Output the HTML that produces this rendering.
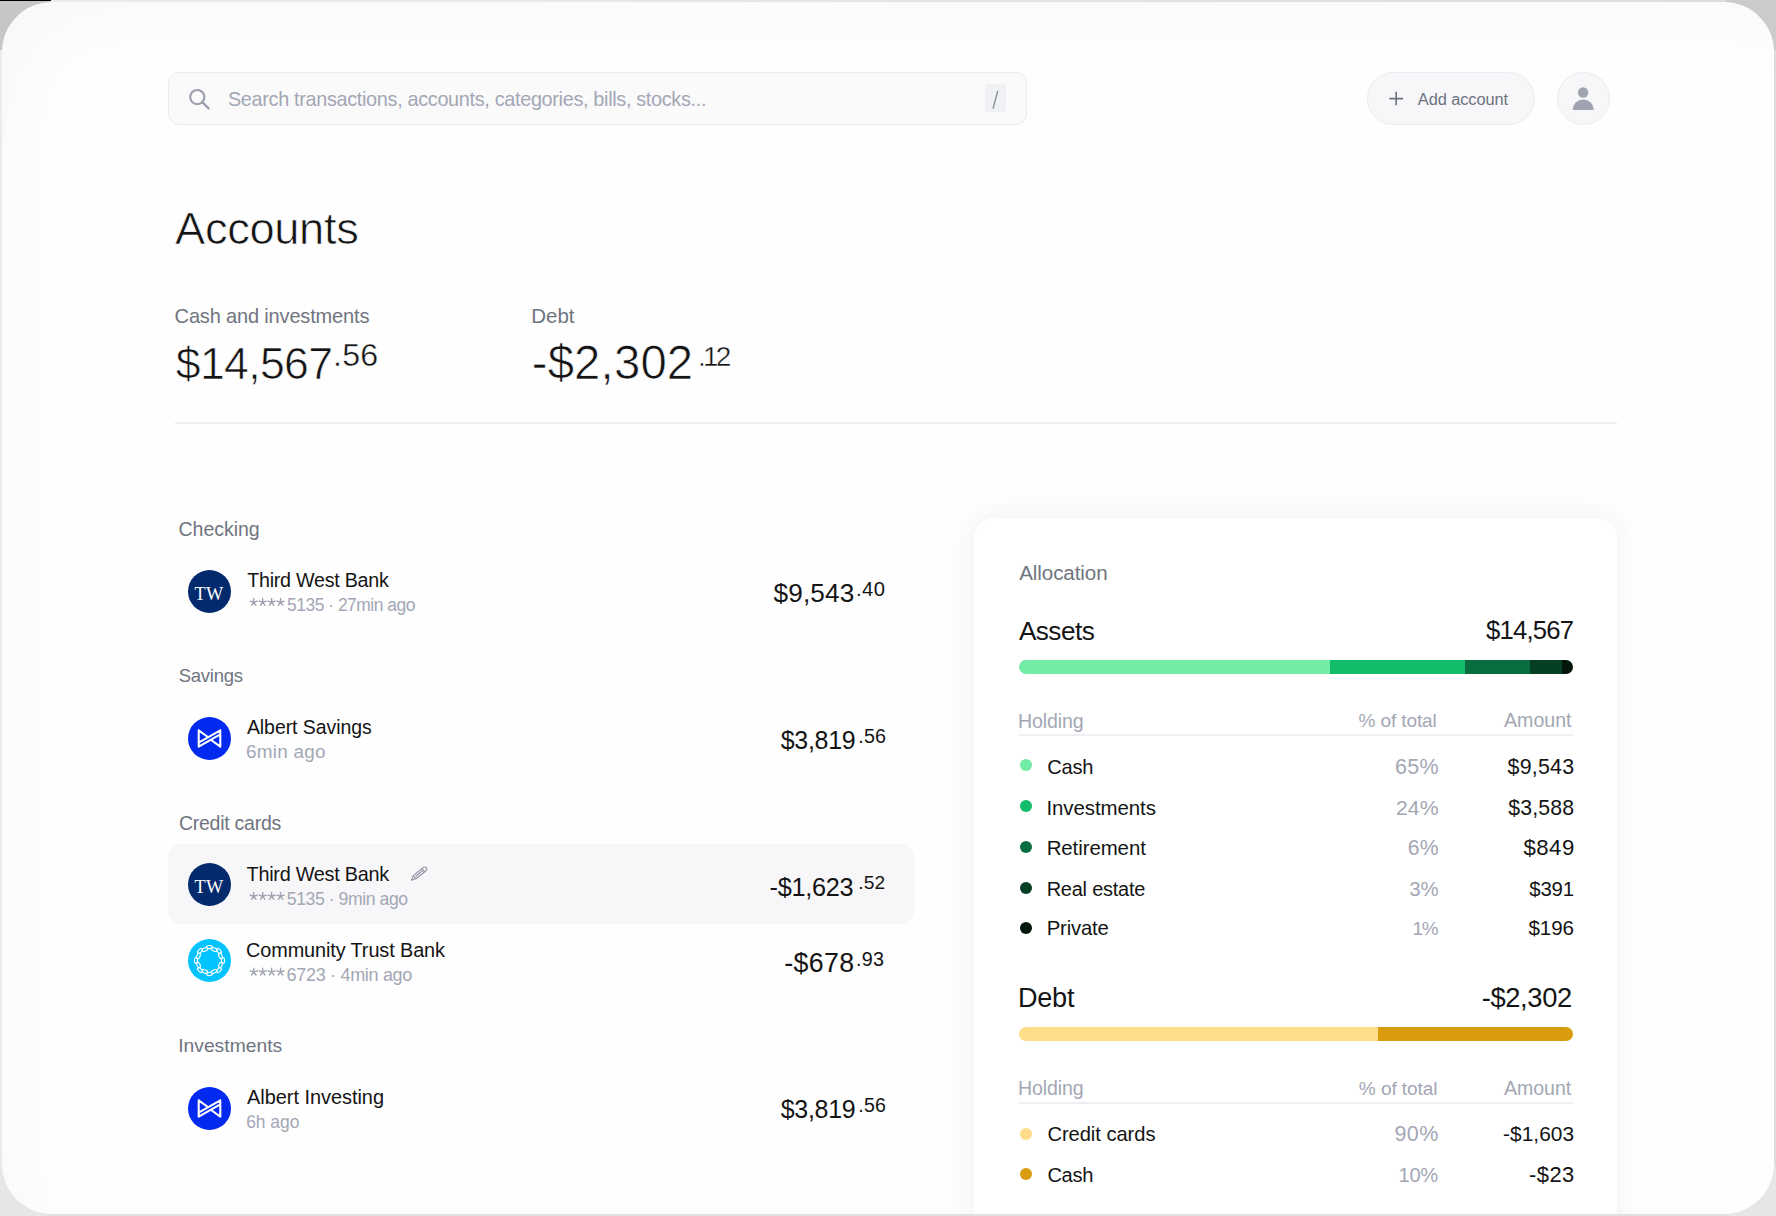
<!DOCTYPE html>
<html><head><meta charset="utf-8"><style>
html,body{margin:0;padding:0;width:1776px;height:1216px;overflow:hidden}
body{background:linear-gradient(90deg,#ececec 0,#e4e4e4 50%,#dcdcdc 100%);position:relative;font-family:"Liberation Sans",sans-serif}
.frame{position:absolute;left:2px;top:2px;width:1772px;height:1212px;border-radius:50px;background:#fefefe;overflow:hidden}
.sheen{position:absolute;left:0;top:0;width:1772px;height:1212px;border-radius:50px;box-shadow:inset 40px 40px 90px -30px rgba(0,0,0,0.028)}
.topbar{position:absolute;left:0;top:0;width:51px;height:1px;background:#000}
.t{position:absolute;white-space:nowrap}
.ic{position:absolute;display:block}
.circ{position:absolute;border-radius:50%}
.search{position:absolute;left:168px;top:72px;width:857px;height:51px;border:1px solid #ebecf0;border-radius:11px;background:#fafafb}
.kbd{position:absolute;left:985px;top:84px;width:21px;height:28px;border-radius:3px;background:#f0f1f5}
.btn{position:absolute;left:1367px;top:72px;width:166px;height:51px;border:1px solid #ebecf0;border-radius:27px;background:#f7f7f9}
.avatar{position:absolute;left:1557px;top:72px;width:51px;height:51px;border:1px solid #ebecf0;border-radius:50%;background:#f7f7f9}
.divider{position:absolute;left:175px;top:422px;width:1442px;height:2px;background:#f0f0f3}
.hl{position:absolute;left:168px;top:844px;width:746px;height:80px;border-radius:13px;background:#f7f7f9}
.card{position:absolute;left:974px;top:518px;width:643px;height:760px;border-radius:20px;background:#fff;box-shadow:0 0 22px 5px rgba(40,50,90,0.05)}
.bar{position:absolute;height:14px;border-radius:7px;overflow:hidden;display:flex}
.bar div{height:100%}
.rule{position:absolute;height:2px;background:#efeff3}
.dot{position:absolute;width:12px;height:12px;border-radius:50%}
</style></head><body>
<div style="position:absolute;left:0;top:0;width:50px;height:50px;background:#c6c6c6"></div>
<div style="position:absolute;right:0;top:0;width:50px;height:50px;background:#cbcbcb"></div>
<div style="position:absolute;left:0;bottom:0;width:50px;height:50px;background:#e6e6e6"></div>
<div style="position:absolute;right:0;bottom:0;width:50px;height:50px;background:#e6e6e6"></div>
<div class="topbar"></div>
<div class="frame"><div class="sheen"></div></div>
<div class="search"></div>
<svg class="ic" style="left:185px;top:85px" width="28" height="28" viewBox="185 85 28 28">
<circle cx="197.3" cy="97.1" r="7.1" stroke="#9a9eac" stroke-width="2.1" fill="none"/>
<line x1="202.6" y1="102.4" x2="208.6" y2="108.4" stroke="#9a9eac" stroke-width="2.2" stroke-linecap="round"/></svg>
<div class="kbd"></div>
<svg class="ic" style="left:985px;top:84px" width="21" height="28" viewBox="985 84 21 28">
<line x1="997.6" y1="91.5" x2="993.2" y2="108" stroke="#8e92a0" stroke-width="1.4" stroke-linecap="round"/></svg>
<div class="btn"></div>
<svg class="ic" style="left:1385px;top:88px" width="22" height="22" viewBox="1385 88 22 22">
<path d="M1389.4,98.6 H1403 M1396.2,91.8 V105.3" stroke="#6b6f7b" stroke-width="1.6"/></svg>
<div class="avatar"></div>
<svg class="ic" style="left:1557px;top:72px" width="53" height="53" viewBox="1557 72 53 53">
<circle cx="1583.1" cy="92.5" r="5.2" fill="#a0a4b1"/>
<path d="M1572.7,109.9 A10.5,10.5 0 0 1 1593.7,109.9 Z" fill="#a0a4b1"/></svg>
<div class="divider"></div>
<div class="hl"></div>
<svg class="ic" style="left:408px;top:863px" width="22" height="22" viewBox="408 863 22 22">
<g stroke="#8f93a1" stroke-width="1.1" fill="none" stroke-linejoin="round">
<path d="M411.6,880.2 L413.2,875.6 L423.4,867.4 Q425,866.3 426.4,867.9 Q427.6,869.4 426.1,870.7 L415.9,878.8 Z"/>
<path d="M413.2,875.6 L415.9,878.8 M421.9,868.6 L424.6,871.9 M415.6,876.2 L422.6,870.5"/></g></svg>
<div class="card"></div>
<div class="bar" style="left:1019px;top:660px;width:554px"><div style="width:311px;background:#72eba4"></div><div style="width:135px;background:#13bc6a"></div><div style="width:65px;background:#0a6d40"></div><div style="width:32px;background:#053f24"></div><div style="width:11px;background:#03160c"></div></div>
<div class="rule" style="left:1019px;top:734px;width:554px"></div>
<div class="dot" style="left:1019.8px;top:759px;background:#72eba4"></div>
<div class="dot" style="left:1019.8px;top:800px;background:#13bc6a"></div>
<div class="dot" style="left:1019.8px;top:840.8px;background:#0a6d40"></div>
<div class="dot" style="left:1019.8px;top:881.6px;background:#053f24"></div>
<div class="dot" style="left:1019.8px;top:922.4px;background:#03160c"></div>
<div class="bar" style="left:1019px;top:1027.4px;width:554px"><div style="width:359px;background:#ffdc8a"></div><div style="width:195px;background:#d99c0f"></div></div>
<div class="rule" style="left:1019px;top:1102px;width:554px"></div>
<div class="dot" style="left:1019.8px;top:1128px;background:#ffdc8a"></div>
<div class="dot" style="left:1019.8px;top:1168.2px;background:#d99c0f"></div>
<svg class="ic" style="left:0;top:0" width="1776" height="1216"><path d="M253.75,602.25 L253.75,598.50 M253.75,602.25 L257.32,601.09 M253.75,602.25 L255.95,605.28 M253.75,602.25 L251.55,605.28 M253.75,602.25 L250.18,601.09 M262.70,602.25 L262.70,598.50 M262.70,602.25 L266.27,601.09 M262.70,602.25 L264.90,605.28 M262.70,602.25 L260.50,605.28 M262.70,602.25 L259.13,601.09 M271.65,602.25 L271.65,598.50 M271.65,602.25 L275.22,601.09 M271.65,602.25 L273.85,605.28 M271.65,602.25 L269.45,605.28 M271.65,602.25 L268.08,601.09 M280.60,602.25 L280.60,598.50 M280.60,602.25 L284.17,601.09 M280.60,602.25 L282.80,605.28 M280.60,602.25 L278.40,605.28 M280.60,602.25 L277.03,601.09 " stroke="#9fa3b1" stroke-width="1.35" stroke-linecap="round" fill="none"/></svg>
<svg class="ic" style="left:0;top:0" width="1776" height="1216"><path d="M253.75,896.25 L253.75,892.50 M253.75,896.25 L257.32,895.09 M253.75,896.25 L255.95,899.28 M253.75,896.25 L251.55,899.28 M253.75,896.25 L250.18,895.09 M262.70,896.25 L262.70,892.50 M262.70,896.25 L266.27,895.09 M262.70,896.25 L264.90,899.28 M262.70,896.25 L260.50,899.28 M262.70,896.25 L259.13,895.09 M271.65,896.25 L271.65,892.50 M271.65,896.25 L275.22,895.09 M271.65,896.25 L273.85,899.28 M271.65,896.25 L269.45,899.28 M271.65,896.25 L268.08,895.09 M280.60,896.25 L280.60,892.50 M280.60,896.25 L284.17,895.09 M280.60,896.25 L282.80,899.28 M280.60,896.25 L278.40,899.28 M280.60,896.25 L277.03,895.09 " stroke="#9fa3b1" stroke-width="1.35" stroke-linecap="round" fill="none"/></svg>
<svg class="ic" style="left:0;top:0" width="1776" height="1216"><path d="M253.75,971.95 L253.75,968.20 M253.75,971.95 L257.32,970.79 M253.75,971.95 L255.95,974.98 M253.75,971.95 L251.55,974.98 M253.75,971.95 L250.18,970.79 M262.70,971.95 L262.70,968.20 M262.70,971.95 L266.27,970.79 M262.70,971.95 L264.90,974.98 M262.70,971.95 L260.50,974.98 M262.70,971.95 L259.13,970.79 M271.65,971.95 L271.65,968.20 M271.65,971.95 L275.22,970.79 M271.65,971.95 L273.85,974.98 M271.65,971.95 L269.45,974.98 M271.65,971.95 L268.08,970.79 M280.60,971.95 L280.60,968.20 M280.60,971.95 L284.17,970.79 M280.60,971.95 L282.80,974.98 M280.60,971.95 L278.40,974.98 M280.60,971.95 L277.03,970.79 " stroke="#9fa3b1" stroke-width="1.35" stroke-linecap="round" fill="none"/></svg>
<div class="circ" style="left:187.9px;top:569.8px;width:43px;height:43px;background:#022a6c"></div>
<svg class="ic" style="left:188.3px;top:717px" width="43" height="43" viewBox="-21.5 -21.5 43 43">
<circle r="21.5" fill="#0229ef"/>
<g stroke="#fff" stroke-width="2.1" stroke-linecap="round" stroke-linejoin="round" fill="none">
<path d="M-10.8,-8.2 L-1.29,-1.26 M-10.8,4.2 L10.8,-8.2 M-10.8,8.2 L10.8,-4.2 M10.8,8.2 L1.29,1.26 M-10.8,-8.2 L-10.8,8.2 M10.8,-8.2 L10.8,8.2"/>
</g></svg>
<div class="circ" style="left:188px;top:863.2px;width:43px;height:43px;background:#022a6c"></div>
<svg class="ic" style="left:188px;top:938.8px" width="43" height="43" viewBox="-21.5 -21.5 43 43">
<circle r="21.5" fill="#00c3ff"/>
<g stroke="#fff" stroke-width="1.15" fill="none"><ellipse cx="0.00" cy="-13.50" rx="3.0" ry="1.55" transform="rotate(0.0 0.00 -13.50)"/><ellipse cx="4.55" cy="-10.99" rx="3.0" ry="1.55" transform="rotate(22.5 4.55 -10.99)"/><ellipse cx="9.55" cy="-9.55" rx="3.0" ry="1.55" transform="rotate(45.0 9.55 -9.55)"/><ellipse cx="10.99" cy="-4.55" rx="3.0" ry="1.55" transform="rotate(67.5 10.99 -4.55)"/><ellipse cx="13.50" cy="0.00" rx="3.0" ry="1.55" transform="rotate(90.0 13.50 0.00)"/><ellipse cx="10.99" cy="4.55" rx="3.0" ry="1.55" transform="rotate(112.5 10.99 4.55)"/><ellipse cx="9.55" cy="9.55" rx="3.0" ry="1.55" transform="rotate(135.0 9.55 9.55)"/><ellipse cx="4.55" cy="10.99" rx="3.0" ry="1.55" transform="rotate(157.5 4.55 10.99)"/><ellipse cx="0.00" cy="13.50" rx="3.0" ry="1.55" transform="rotate(180.0 0.00 13.50)"/><ellipse cx="-4.55" cy="10.99" rx="3.0" ry="1.55" transform="rotate(202.5 -4.55 10.99)"/><ellipse cx="-9.55" cy="9.55" rx="3.0" ry="1.55" transform="rotate(225.0 -9.55 9.55)"/><ellipse cx="-10.99" cy="4.55" rx="3.0" ry="1.55" transform="rotate(247.5 -10.99 4.55)"/><ellipse cx="-13.50" cy="0.00" rx="3.0" ry="1.55" transform="rotate(270.0 -13.50 0.00)"/><ellipse cx="-10.99" cy="-4.55" rx="3.0" ry="1.55" transform="rotate(292.5 -10.99 -4.55)"/><ellipse cx="-9.55" cy="-9.55" rx="3.0" ry="1.55" transform="rotate(315.0 -9.55 -9.55)"/><ellipse cx="-4.55" cy="-10.99" rx="3.0" ry="1.55" transform="rotate(337.5 -4.55 -10.99)"/></g></svg>
<svg class="ic" style="left:188.2px;top:1086.9px" width="43" height="43" viewBox="-21.5 -21.5 43 43">
<circle r="21.5" fill="#0229ef"/>
<g stroke="#fff" stroke-width="2.1" stroke-linecap="round" stroke-linejoin="round" fill="none">
<path d="M-10.8,-8.2 L-1.29,-1.26 M-10.8,4.2 L10.8,-8.2 M-10.8,8.2 L10.8,-4.2 M10.8,8.2 L1.29,1.26 M-10.8,-8.2 L-10.8,8.2 M10.8,-8.2 L10.8,8.2"/>
</g></svg>
<div class="t" style="left:227.95px;top:90px;font-size:19.89px;line-height:19.89px;color:#a3a7b5;letter-spacing:-0.34px">Search transactions, accounts, categories, bills, stocks...</div>
<div class="t" style="left:1417.8px;top:91px;font-size:16.42px;line-height:16.42px;color:#6e7280;letter-spacing:-0.09px">Add account</div>
<div class="t" style="left:175.1px;top:206px;font-size:45.26px;line-height:45.26px;color:#141414;letter-spacing:-0.35px;-webkit-text-stroke:0.7px #fdfdfd">Accounts</div>
<div class="t" style="left:174.6px;top:306px;font-size:20.03px;line-height:20.03px;color:#707480;letter-spacing:-0.17px">Cash and investments</div>
<div class="t" style="left:175.75px;top:342px;font-size:44.61px;line-height:44.61px;color:#141414;letter-spacing:-0.66px;-webkit-text-stroke:0.7px #fefefe">$14,567</div>
<div class="t" style="left:333.1px;top:339px;font-size:32.23px;line-height:32.23px;color:#141414;letter-spacing:0.13px;-webkit-text-stroke:0.4px #fefefe">.56</div>
<div class="t" style="left:531.36px;top:306px;font-size:20.48px;line-height:20.48px;color:#707480;letter-spacing:-0.06px">Debt</div>
<div class="t" style="left:531.71px;top:339px;font-size:47.28px;line-height:47.28px;color:#141414;letter-spacing:0.19px;-webkit-text-stroke:0.7px #fefefe">-$2,302</div>
<div class="t" style="left:697.98px;top:343px;font-size:28px;line-height:28px;color:#141414;letter-spacing:-2.76px;-webkit-text-stroke:0.4px #fefefe">.12</div>
<div class="t" style="left:178.52px;top:520px;font-size:19.57px;line-height:19.57px;color:#707480;letter-spacing:-0.06px">Checking</div>
<div class="t" style="left:247.21px;top:571px;font-size:19.72px;line-height:19.72px;color:#141414;letter-spacing:-0.26px">Third West Bank</div>
<div class="t" style="left:287px;top:597px;font-size:17.43px;line-height:17.43px;color:#a3a7b5;letter-spacing:-0.48px">5135 · 27min ago</div>
<div class="t" style="left:773.54px;top:580px;font-size:26.18px;line-height:26.18px;color:#141414;letter-spacing:0.15px">$9,543</div>
<div class="t" style="left:855.88px;top:579px;font-size:20.19px;line-height:20.19px;color:#141414;letter-spacing:0.54px">.40</div>
<div class="t" style="left:178.76px;top:667px;font-size:18.51px;line-height:18.51px;color:#707480;letter-spacing:-0.26px">Savings</div>
<div class="t" style="left:246.9px;top:718px;font-size:19.47px;line-height:19.47px;color:#141414;letter-spacing:-0.04px">Albert Savings</div>
<div class="t" style="left:245.96px;top:743px;font-size:18.9px;line-height:18.9px;color:#a3a7b5;letter-spacing:0.27px">6min ago</div>
<div class="t" style="left:780.65px;top:728px;font-size:24.96px;line-height:24.96px;color:#141414;letter-spacing:-0.25px">$3,819</div>
<div class="t" style="left:858.22px;top:727px;font-size:19.73px;line-height:19.73px;color:#141414;letter-spacing:0.18px">.56</div>
<div class="t" style="left:178.93px;top:814px;font-size:19.47px;line-height:19.47px;color:#707480;letter-spacing:-0.23px">Credit cards</div>
<div class="t" style="left:246.6px;top:865px;font-size:19.85px;line-height:19.85px;color:#141414;letter-spacing:-0.27px">Third West Bank</div>
<div class="t" style="left:286.8px;top:891px;font-size:17.62px;line-height:17.62px;color:#a3a7b5;letter-spacing:-0.43px">5135 · 9min ago</div>
<div class="t" style="left:769.49px;top:875px;font-size:25.29px;line-height:25.29px;color:#141414;letter-spacing:-0.26px">-$1,623</div>
<div class="t" style="left:858.28px;top:873px;font-size:19.16px;line-height:19.16px;color:#141414;letter-spacing:0.19px">.52</div>
<div class="t" style="left:246.01px;top:941px;font-size:19.86px;line-height:19.86px;color:#141414;letter-spacing:-0.1px">Community Trust Bank</div>
<div class="t" style="left:286.6px;top:966px;font-size:18.02px;line-height:18.02px;color:#a3a7b5;letter-spacing:-0.32px">6723 · 4min ago</div>
<div class="t" style="left:784.13px;top:950px;font-size:26.79px;line-height:26.79px;color:#141414;letter-spacing:0.36px">-$678</div>
<div class="t" style="left:855.92px;top:950px;font-size:19.78px;line-height:19.78px;color:#141414;letter-spacing:0.3px">.93</div>
<div class="t" style="left:178.17px;top:1036px;font-size:19.26px;line-height:19.26px;color:#707480;letter-spacing:0.02px">Investments</div>
<div class="t" style="left:247px;top:1088px;font-size:19.95px;line-height:19.95px;color:#141414;letter-spacing:-0.03px">Albert Investing</div>
<div class="t" style="left:246.13px;top:1114px;font-size:17.45px;line-height:17.45px;color:#a3a7b5">6h ago</div>
<div class="t" style="left:780.65px;top:1097px;font-size:24.96px;line-height:24.96px;color:#141414;letter-spacing:-0.25px">$3,819</div>
<div class="t" style="left:858.24px;top:1096px;font-size:19.57px;line-height:19.57px;color:#141414;letter-spacing:0.28px">.56</div>
<div class="t" style="left:1019.2px;top:563px;font-size:20.58px;line-height:20.58px;color:#707480;letter-spacing:-0.09px">Allocation</div>
<div class="t" style="left:1018.9px;top:618px;font-size:26.2px;line-height:26.2px;color:#141414;letter-spacing:-0.55px">Assets</div>
<div class="t" style="left:1486.04px;top:618px;font-size:25.69px;line-height:25.69px;color:#141414;letter-spacing:-0.8px">$14,567</div>
<div class="t" style="left:1018.03px;top:712px;font-size:19.57px;line-height:19.57px;color:#a3a7b5;letter-spacing:-0.1px">Holding</div>
<div class="t" style="left:1358.43px;top:711px;font-size:19.05px;line-height:19.05px;color:#a3a7b5;letter-spacing:-0.11px">% of total</div>
<div class="t" style="left:1504px;top:711px;font-size:19.56px;line-height:19.56px;color:#a3a7b5;letter-spacing:0.03px">Amount</div>
<div class="t" style="left:1047.3px;top:757px;font-size:20.08px;line-height:20.08px;color:#141414;letter-spacing:-0.28px">Cash</div>
<div class="t" style="left:1394.93px;top:757px;font-size:21.48px;line-height:21.48px;color:#a3a7b5;letter-spacing:0.36px">65%</div>
<div class="t" style="left:1507.59px;top:757px;font-size:21.41px;line-height:21.41px;color:#141414;letter-spacing:0.2px">$9,543</div>
<div class="t" style="left:1046.46px;top:798px;font-size:20.48px;line-height:20.48px;color:#141414;letter-spacing:-0.09px">Investments</div>
<div class="t" style="left:1395.94px;top:797px;font-size:21.14px;line-height:21.14px;color:#a3a7b5;letter-spacing:0.18px">24%</div>
<div class="t" style="left:1508.19px;top:798px;font-size:21.28px;line-height:21.28px;color:#141414;letter-spacing:0.16px">$3,588</div>
<div class="t" style="left:1046.66px;top:838px;font-size:20.47px;line-height:20.47px;color:#141414;letter-spacing:-0.09px">Retirement</div>
<div class="t" style="left:1407.74px;top:837px;font-size:21.17px;line-height:21.17px;color:#a3a7b5;letter-spacing:0.28px">6%</div>
<div class="t" style="left:1523.38px;top:837px;font-size:22.17px;line-height:22.17px;color:#141414;letter-spacing:0.54px">$849</div>
<div class="t" style="left:1046.7px;top:880px;font-size:19.94px;line-height:19.94px;color:#141414;letter-spacing:-0.22px">Real estate</div>
<div class="t" style="left:1409.19px;top:879px;font-size:20.5px;line-height:20.5px;color:#a3a7b5;letter-spacing:-0.21px">3%</div>
<div class="t" style="left:1529.2px;top:879px;font-size:20.43px;line-height:20.43px;color:#141414;letter-spacing:-0.14px">$391</div>
<div class="t" style="left:1046.68px;top:918px;font-size:20.25px;line-height:20.25px;color:#141414;letter-spacing:-0.14px">Private</div>
<div class="t" style="left:1412.58px;top:920px;font-size:18.91px;line-height:18.91px;color:#a3a7b5;letter-spacing:-1.36px">1%</div>
<div class="t" style="left:1528.49px;top:918px;font-size:20.58px;line-height:20.58px;color:#141414;letter-spacing:-0.08px">$196</div>
<div class="t" style="left:1017.93px;top:984px;font-size:27.1px;line-height:27.1px;color:#141414;letter-spacing:-0.24px">Debt</div>
<div class="t" style="left:1481.81px;top:984px;font-size:27.33px;line-height:27.33px;color:#141414;letter-spacing:-0.39px">-$2,302</div>
<div class="t" style="left:1018.03px;top:1079px;font-size:19.57px;line-height:19.57px;color:#a3a7b5;letter-spacing:-0.1px">Holding</div>
<div class="t" style="left:1358.83px;top:1079px;font-size:19.08px;line-height:19.08px;color:#a3a7b5;letter-spacing:-0.1px">% of total</div>
<div class="t" style="left:1503.9px;top:1079px;font-size:19.54px;line-height:19.54px;color:#a3a7b5;letter-spacing:0.02px">Amount</div>
<div class="t" style="left:1047.39px;top:1124px;font-size:20.16px;line-height:20.16px;color:#141414;letter-spacing:-0.05px">Credit cards</div>
<div class="t" style="left:1394.54px;top:1124px;font-size:21.47px;line-height:21.47px;color:#a3a7b5;letter-spacing:0.36px">90%</div>
<div class="t" style="left:1503.06px;top:1124px;font-size:20.9px;line-height:20.9px;color:#141414;letter-spacing:0.03px">-$1,603</div>
<div class="t" style="left:1047.39px;top:1165px;font-size:20.13px;line-height:20.13px;color:#141414;letter-spacing:-0.32px">Cash</div>
<div class="t" style="left:1398.59px;top:1165px;font-size:20.12px;line-height:20.12px;color:#a3a7b5;letter-spacing:-0.34px">10%</div>
<div class="t" style="left:1529.12px;top:1164px;font-size:21.93px;line-height:21.93px;color:#141414;letter-spacing:0.39px">-$23</div>
<div class="t" style="left:194.62px;top:585px;font-size:18.28px;line-height:18.28px;color:#ffffff;letter-spacing:0.24px;font-family:'Liberation Serif',serif">TW</div>
<div class="t" style="left:194.62px;top:878px;font-size:18.28px;line-height:18.28px;color:#ffffff;letter-spacing:0.24px;font-family:'Liberation Serif',serif">TW</div>
<div style="position:absolute;left:50px;top:1214px;width:1676px;height:2px;background:#e0e0e0"></div>
</body></html>
